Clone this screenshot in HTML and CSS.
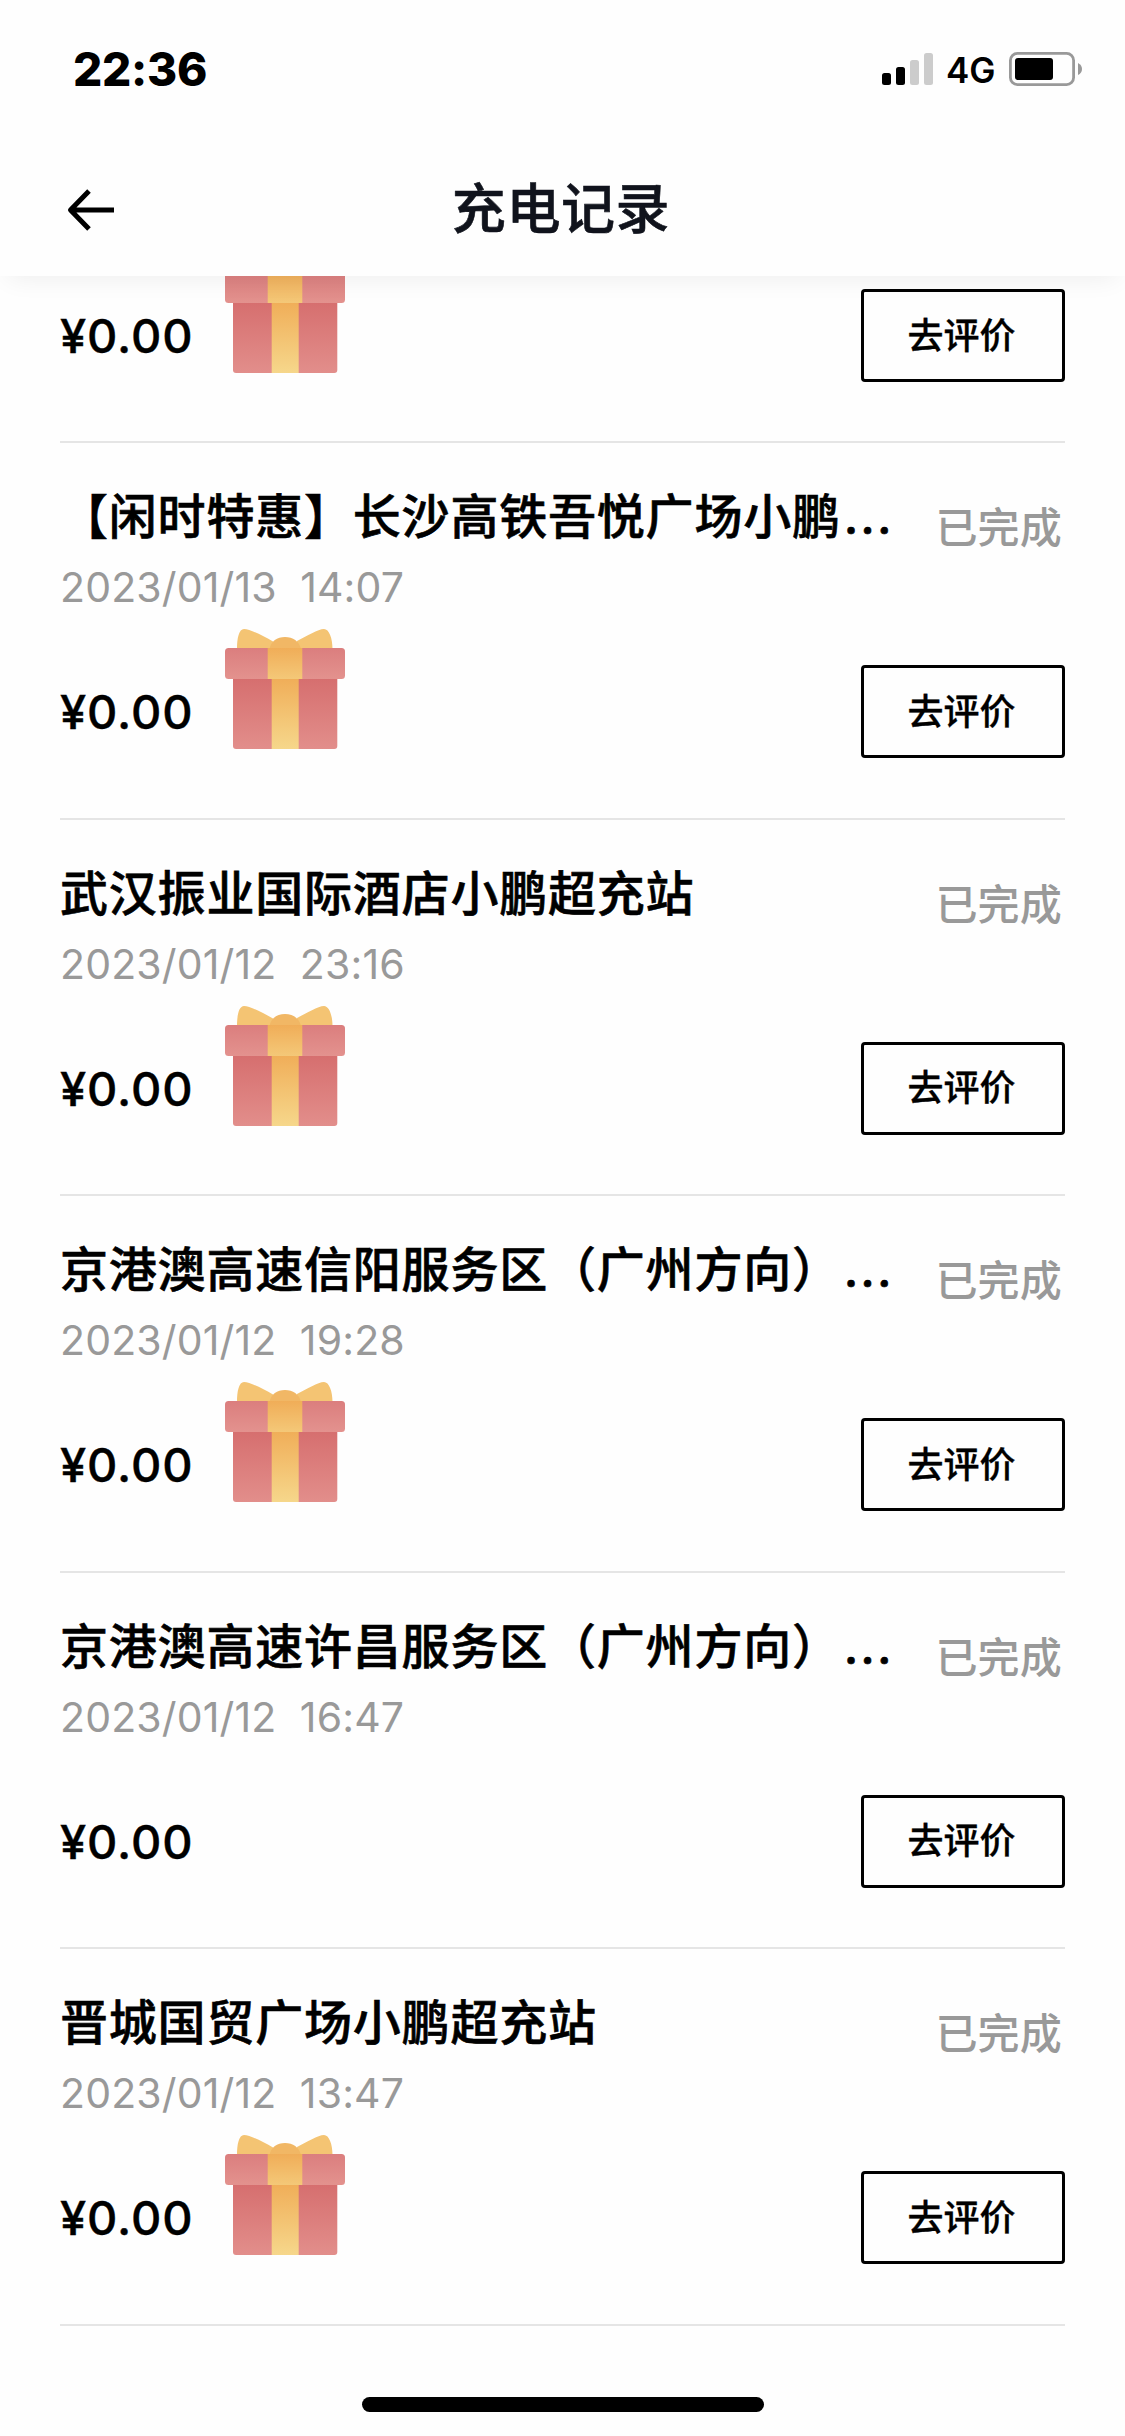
FILE: index.html
```html
<!DOCTYPE html>
<html lang="zh-CN">
<head>
<meta charset="utf-8">
<title>充电记录</title>
<link rel="stylesheet" href="styles.css">
</head>
<body>
<svg class="defs" width="0" height="0" aria-hidden="true">
  <defs>
    <linearGradient id="red" x1="0" y1="0" x2="0" y2="1"><stop offset="0" stop-color="#d66f6f"/><stop offset="1" stop-color="#e28e8b"/></linearGradient>
    <linearGradient id="lid" x1="0" y1="0" x2="0" y2="1"><stop offset="0" stop-color="#db7e7e"/><stop offset="1" stop-color="#e3928e"/></linearGradient>
    <linearGradient id="gold" x1="0" y1="0" x2="0" y2="1"><stop offset="0" stop-color="#f0ae59"/><stop offset="1" stop-color="#f6d78b"/></linearGradient>
    <linearGradient id="band" x1="0" y1="0" x2="0" y2="1"><stop offset="0" stop-color="#f0ad58"/><stop offset="1" stop-color="#f4c878"/></linearGradient>
    <symbol id="gift" viewBox="0 0 120 120">
      <path d="M12 20C12 9 14 0 19 0C25 0 38 7 48 12.500V20ZM107.500 20C107.500 9 104 0 99 0C93 0 82 7 72 12V20Z" fill="#f4c473"/>
      <path d="M44.500 20C46 12 52 8 60 8S74 12 76 20Z" fill="#f1b765"/>
      <path d="M8 50H112.300V117Q112.300 120 109.300 120H11Q8 120 8 117Z" fill="url(#red)"/>
      <rect x="46.700" y="50" width="27" height="70" fill="url(#gold)"/>
      <rect y="19" width="120" height="31" rx="3.500" fill="url(#lid)"/>
      <rect x="42.700" y="19" width="34.600" height="31" fill="url(#band)"/>
    </symbol>
  </defs>
</svg>
<div class="screen">
  <header class="header">
    <div class="status-bar">
      <span class="time">22:36</span>
      <div class="indicators">
        <svg class="signal" viewBox="0 0 51 32">
          <rect x="0" y="20" width="9" height="12" rx="2.500"/>
          <rect x="14" y="14" width="9" height="18" rx="2.500"/>
          <rect x="28" y="7" width="9" height="25" rx="2.500" fill="#ccc"/>
          <rect x="42" y="0" width="9" height="32" rx="2.500" fill="#ccc"/>
        </svg>
        <span class="network">4G</span>
        <svg class="battery" viewBox="0 0 73 34">
          <rect x="1.400" y="1.400" width="63.200" height="31.200" rx="7" fill="none" stroke="#999" stroke-width="2.800"/>
          <rect x="6" y="6" width="38" height="22" rx="3"/>
          <path d="M69 11Q73 13 73 17T69 23Z" fill="#999"/>
        </svg>
      </div>
    </div>
    <nav class="nav">
      <svg class="back" viewBox="0 0 48 44"><path d="M22 3L3.500 22L22 41M3.500 22H47" fill="none" stroke="#000" stroke-width="5" stroke-linejoin="round"/></svg>
      <h1 class="page-title">充电记录</h1>
    </nav>
  </header>
  <main class="list">
    <article class="record record-cut">
      <div class="bottom"><span class="price">¥0.00</span><svg class="gift"><use href="#gift"/></svg><button class="review">去评价</button></div>
    </article>
    <article class="record">
      <div class="top"><h2 class="name">【闲时特惠】长沙高铁吾悦广场小鹏<span class="dots">...</span></h2><span class="state">已完成</span></div>
      <time class="date">2023/01/13  14:07</time>
      <div class="bottom"><span class="price">¥0.00</span><svg class="gift"><use href="#gift"/></svg><button class="review">去评价</button></div>
    </article>
    <article class="record">
      <div class="top"><h2 class="name">武汉振业国际酒店小鹏超充站</h2><span class="state">已完成</span></div>
      <time class="date">2023/01/12  23:16</time>
      <div class="bottom"><span class="price">¥0.00</span><svg class="gift"><use href="#gift"/></svg><button class="review">去评价</button></div>
    </article>
    <article class="record">
      <div class="top"><h2 class="name">京港澳高速信阳服务区（广州方向）<span class="dots">...</span></h2><span class="state">已完成</span></div>
      <time class="date">2023/01/12  19:28</time>
      <div class="bottom"><span class="price">¥0.00</span><svg class="gift"><use href="#gift"/></svg><button class="review">去评价</button></div>
    </article>
    <article class="record">
      <div class="top"><h2 class="name">京港澳高速许昌服务区（广州方向）<span class="dots">...</span></h2><span class="state">已完成</span></div>
      <time class="date">2023/01/12  16:47</time>
      <div class="bottom"><span class="price">¥0.00</span><button class="review">去评价</button></div>
    </article>
    <article class="record">
      <div class="top"><h2 class="name">晋城国贸广场小鹏超充站</h2><span class="state">已完成</span></div>
      <time class="date">2023/01/12  13:47</time>
      <div class="bottom"><span class="price">¥0.00</span><svg class="gift"><use href="#gift"/></svg><button class="review">去评价</button></div>
    </article>
  </main>
  <footer class="home"><div class="home-bar"></div></footer>
</div>
</body>
</html>
```
FILE: styles.css
```css
* { box-sizing: border-box; margin: 0; padding: 0; }
body {
  background: #fefefe;
  color: #000;
  font-family: "Inter", "Noto Sans CJK SC", sans-serif;
  text-spacing-trim: space-all;
}
.defs { position: absolute; }
.screen {
  width: 1125px;
  height: 2436px;
  display: flex;
  flex-direction: column;
  overflow: hidden;
}
.header {
  position: relative;
  z-index: 1;
  flex: none;
  height: 276px;
  background: #fefefe;
  box-shadow: 0 10px 24px -8px rgba(0, 0, 0, .07);
}
.status-bar {
  height: 138px;
  padding: 0 43px 0 73px;
  display: flex;
  justify-content: space-between;
}
.time { font-size: 46px; font-weight: 800; letter-spacing: -.3px; line-height: 138px; }
.indicators { display: flex; padding-top: 52px; }
.signal { width: 51px; height: 32px; margin: 1px 13px 0 0; }
.network { width: 51px; margin-right: 12px; font-size: 35px; font-weight: 600; line-height: 36px; }
.battery { width: 73px; height: 34px; }
.nav {
  height: 138px;
  padding-top: 6px;
  display: grid;
  grid-template-columns: 1fr auto 1fr;
  align-items: center;
}
.back { width: 48px; height: 44px; margin-left: 67px; }
.page-title {
  margin-right: 3px;
  font-size: 54px;
  font-weight: 500;
  letter-spacing: .6px;
  line-height: 80px;
  color: #10131c;
  -webkit-text-stroke: .6px;
}
.list { padding: 0 60px; }
.record {
  height: 376.6px;
  padding-top: 44px;
  border-bottom: 2px solid #e5e5e5;
}
.record-cut { height: 167px; padding-top: 0; }
.top {
  height: 70px;
  display: flex;
  justify-content: space-between;
}
.name {
  font-size: 48px;
  font-weight: 500;
  letter-spacing: .8px;
  line-height: 60px;
  white-space: nowrap;
  -webkit-text-stroke: .6px;
}
.dots { margin-left: 3px; letter-spacing: 2px; }
.state { padding: 11px 3px 0 0; font-size: 42px; font-weight: 500; letter-spacing: .2px; line-height: 60px; color: #999; }
.date {
  display: block;
  height: 60px;
  font-size: 41px;
  letter-spacing: .15px;
  line-height: 60px;
  color: #999;
  white-space: pre;
}
.bottom { height: 141px; padding-top: 48px; display: flex; align-items: flex-start; }
.record-cut .bottom { padding-top: 13px; }
.price { width: 165px; font-size: 47px; font-weight: 500; letter-spacing: .9px; line-height: 94px; -webkit-text-stroke: .4px; }
.gift { width: 120px; height: 120px; margin-top: -36px; }
.review {
  width: 204px;
  height: 93px;
  margin-left: auto;
  padding-right: 3px;
  border: 3px solid #000;
  border-radius: 4px;
  background: transparent;
  color: #000;
  font: 500 36px/84px "Inter", "Noto Sans CJK SC", sans-serif;
  -webkit-text-stroke: .3px;
}
.home { margin-top: auto; padding-bottom: 24px; display: flex; justify-content: center; }
.home-bar { width: 402px; height: 15px; border-radius: 8px; background: #000; }
```
